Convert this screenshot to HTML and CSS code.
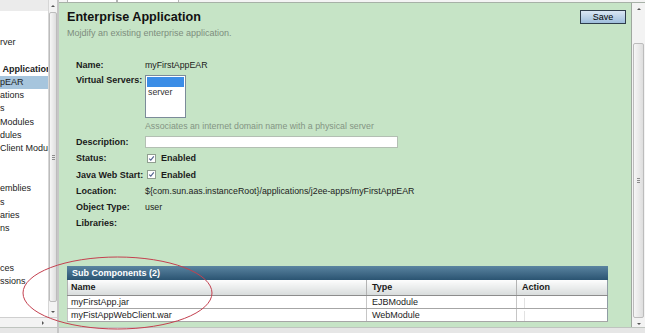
FILE: index.html
```html
<!DOCTYPE html>
<html lang="en">
<head>
    <meta charset="UTF-8">
    <title>Enterprise Application</title>
    <link rel="stylesheet" href="styles.css">
</head>
<body>
    <div class="window">
        <aside class="sidebar">
            <div class="sidebar-body">
                <div class="tree">
                    <div class="tree-top"></div>
                    <ul class="tree-list">
                        <li class="tree-item">rver</li>
                        <li class="tree-item group bold">&nbsp;Application</li>
                        <li class="tree-item selected">pEAR</li>
                        <li class="tree-item">ations</li>
                        <li class="tree-item">s</li>
                        <li class="tree-item">Modules</li>
                        <li class="tree-item">dules</li>
                        <li class="tree-item">Client Module</li>
                        <li class="tree-item group-wide">emblies</li>
                        <li class="tree-item">s</li>
                        <li class="tree-item">aries</li>
                        <li class="tree-item">ns</li>
                        <li class="tree-item group-wide">ces</li>
                        <li class="tree-item">ssions</li>
                    </ul>
                </div>
                <div class="vscroll">
                    <div class="arrow arrow-up"></div>
                    <div class="thumb thumb-tree"><span class="grip"></span></div>
                    <div class="arrow arrow-down"></div>
                </div>
            </div>
            <div class="hscroll">
                <div class="arrow arrow-right"></div>
            </div>
            <div class="bottom-strip"></div>
        </aside>

        <div class="divider"></div>

        <div class="frame">
            <div class="tabs">
                <span class="tab tab-first"></span>
                <span class="tab tab-second"></span>
            </div>
            <div class="frame-body">
                <section class="panel">
                    <div class="page-head">
                        <h1 class="page-title">Enterprise Application</h1>
                        <button class="save-button">Save</button>
                    </div>
                    <p class="page-help">Mojdify an existing enterprise application.</p>

                    <div class="props">
                        <div class="prop-label">Name:</div>
                        <div class="prop-value">myFirstAppEAR</div>

                        <div class="prop-label top">Virtual Servers:</div>
                        <div class="prop-value">
                            <div class="listbox">
                                <div class="listbox-selected"></div>
                                <div class="listbox-option">server</div>
                            </div>
                        </div>

                        <div class="prop-label"></div>
                        <div class="prop-value prop-hint">Associates an internet domain name with a physical server</div>

                        <div class="prop-label">Description:</div>
                        <div class="prop-value"><div class="text-input"></div></div>

                        <div class="prop-label">Status:</div>
                        <div class="prop-value">
                            <span class="check">
                                <span class="checkbox">
                                    <svg width="7" height="7" viewBox="0 0 7 7"><path d="M1.2 3.6 L2.8 5.2 L5.8 1.4" fill="none" stroke="#52628f" stroke-width="1.1"/></svg>
                                </span>
                                Enabled
                            </span>
                        </div>

                        <div class="prop-label">Java Web Start:</div>
                        <div class="prop-value">
                            <span class="check">
                                <span class="checkbox">
                                    <svg width="7" height="7" viewBox="0 0 7 7"><path d="M1.2 3.6 L2.8 5.2 L5.8 1.4" fill="none" stroke="#52628f" stroke-width="1.1"/></svg>
                                </span>
                                Enabled
                            </span>
                        </div>

                        <div class="prop-label">Location:</div>
                        <div class="prop-value">${com.sun.aas.instanceRoot}/applications/j2ee-apps/myFirstAppEAR</div>

                        <div class="prop-label">Object Type:</div>
                        <div class="prop-value">user</div>

                        <div class="prop-label">Libraries:</div>
                        <div class="prop-value"></div>
                    </div>

                    <div class="components">
                        <div class="components-title">Sub Components (2)</div>
                        <table class="components-table">
                            <colgroup>
                                <col class="col-name">
                                <col class="col-type">
                                <col class="col-action">
                            </colgroup>
                            <thead>
                                <tr>
                                    <th>Name</th>
                                    <th>Type</th>
                                    <th>Action</th>
                                </tr>
                            </thead>
                            <tbody>
                                <tr>
                                    <td>myFirstApp.jar</td>
                                    <td>EJBModule</td>
                                    <td><span class="action-slot"></span></td>
                                </tr>
                                <tr>
                                    <td>myFistAppWebClient.war</td>
                                    <td>WebModule</td>
                                    <td><span class="action-slot"></span></td>
                                </tr>
                            </tbody>
                        </table>
                    </div>
                </section>
                <div class="vscroll frame-scroll">
                    <div class="arrow arrow-up"></div>
                    <div class="thumb thumb-frame"><span class="grip"></span></div>
                    <div class="arrow arrow-down"></div>
                </div>
            </div>
            <div class="bottom-strip"></div>
        </div>

        <svg class="annotation" width="645" height="333" viewBox="0 0 645 333">
            <ellipse cx="117.5" cy="293" rx="94.5" ry="36" fill="none" stroke="#c4404f" stroke-width="1"/>
        </svg>
    </div>
</body>
</html>
```

FILE: styles.css
```css
body {
    margin: 0;
    font-family: "Liberation Sans", Arial, sans-serif;
    font-size: 9px;
    color: #1c1c1c;
    background: #e9e9e9;
}

.window {
    position: relative;
    display: flex;
    height: 333px;
    overflow: hidden;
}

/* left navigation tree, scrolled sideways so labels are clipped */
.sidebar {
    width: 57px;
    display: flex;
    flex-direction: column;
    background: #ececec;
}

.sidebar-body {
    flex: 1;
    display: flex;
    min-height: 0;
}

.tree {
    width: 48px;
    background: #fff;
    overflow: hidden;
    white-space: nowrap;
}

.tree-top {
    height: 11px;
    background: #ebebeb;
}

.tree-list {
    list-style: none;
    margin: 0;
    padding: 25px 0 0;
}

.tree-item {
    line-height: 13.3px;
    color: #222;
}

.tree-item.bold {
    font-weight: bold;
}

.tree-item.group {
    margin-top: 13.3px;
}

.tree-item.group-wide {
    margin-top: 26.6px;
}

.tree-item.selected {
    background: #a6c5dd;
}

/* scrollbars */
.vscroll {
    width: 8px;
    background: #f3f3f3;
    border-left: 1px solid #d6d6d6;
    display: flex;
    flex-direction: column;
    align-items: center;
}

.arrow {
    height: 11px;
    width: 100%;
    display: flex;
    align-items: center;
    justify-content: center;
    flex-shrink: 0;
}

.arrow::before {
    content: "";
    border-left: 2px solid transparent;
    border-right: 2px solid transparent;
}

.arrow-up::before {
    border-bottom: 2px solid #555;
}

.arrow-down {
    margin-top: auto;
}

.arrow-down::before {
    border-top: 2px solid #555;
}

.arrow-right {
    width: 11px;
    height: 9px;
}

.arrow-right::before {
    border: 2px solid transparent;
    border-right: none;
    border-left: 2px solid #555;
}

.thumb {
    width: 6px;
    border: 1px solid #bcbcbc;
    border-radius: 2px;
    background: linear-gradient(90deg, #f6f6f6, #dedede);
    display: flex;
    align-items: center;
    justify-content: center;
    flex-shrink: 0;
}

.thumb-tree {
    height: 288px;
    margin-top: 1px;
}

.grip {
    width: 3px;
    height: 5px;
    background: repeating-linear-gradient(#8c8c8c 0 1px, transparent 1px 2px);
}

.hscroll {
    height: 9px;
    background: #f3f3f3;
    border-top: 1px solid #cfcfcf;
    display: flex;
    align-items: center;
    padding-left: 37px;
}

.bottom-strip {
    height: 5px;
    background: #e6e6e6;
    border-top: 1px solid #bfc4bf;
}

.divider {
    width: 2px;
    background: #c6c6c6;
}

/* main frame */
.frame {
    flex: 1;
    display: flex;
    flex-direction: column;
}

.tabs {
    height: 2px;
    display: flex;
    background: #f4f4f4;
    border-bottom: 1px solid #a7b1a7;
}

.tab {
    background: #fff;
    border-left: 1px solid #b4b4b4;
    border-right: 1px solid #b4b4b4;
}

.tab-first {
    width: 48px;
    margin-left: 8px;
}

.tab-second {
    width: 60px;
}

.frame-body {
    flex: 1;
    display: flex;
    min-height: 0;
}

.panel {
    flex: 1;
    background: #c6e4c6;
    padding: 7px 5px 0 8px;
    display: flex;
    flex-direction: column;
}

.frame-scroll {
    width: 13px;
    border-left: 1px solid #9fa89f;
}

.frame-scroll .arrow {
    height: 12px;
}

.thumb-frame {
    width: 9px;
    height: 273px;
    margin-top: 28px;
}

.page-head {
    display: flex;
    justify-content: space-between;
    align-items: center;
    height: 14px;
}

.page-title {
    margin: 0;
    font-size: 12.6px;
    font-weight: bold;
    color: #111;
}

.save-button {
    width: 46px;
    height: 14px;
    padding: 0;
    border: 1px solid #2e3d4b;
    background: linear-gradient(#dae7f4, #9ebedc);
    font-family: "Liberation Sans", Arial, sans-serif;
    font-size: 9px;
    color: #000;
}

.page-help {
    margin: 4px 0 0;
    line-height: 11px;
    color: #7d8d7d;
}

/* property sheet */
.props {
    display: grid;
    grid-template-columns: 69px 1fr;
    margin: 18px 0 0 9px;
}

.prop-label {
    font-weight: bold;
    line-height: 16px;
    color: #1a1a1a;
}

.prop-label.top {
    padding-top: 2px;
    line-height: 11px;
}

.prop-value {
    font-size: 8.8px;
    line-height: 16px;
    color: #1c1c1c;
}

.prop-hint {
    color: #849484;
}

.listbox {
    width: 39px;
    height: 41px;
    margin-top: 2px;
    border: 1px solid #7b8b99;
    background: #fff;
}

.listbox-selected {
    height: 10px;
    margin: 1px;
    background: #3b8de6;
}

.listbox-option {
    padding-left: 2px;
    line-height: 9px;
    color: #333;
}

.text-input {
    width: 251px;
    height: 10px;
    margin-top: 2px;
    border: 1px solid #b3bfb3;
    background: #fff;
}

.check {
    display: inline-flex;
    align-items: center;
    gap: 5px;
    margin-left: 2px;
    font-size: 9px;
    font-weight: bold;
}

.checkbox {
    width: 7px;
    height: 7px;
    border: 1px solid #909e90;
    background: #fff;
    display: flex;
}

/* sub components table */
.components {
    margin: 35px 18px 0 0;
}

.components-title {
    height: 14px;
    line-height: 14px;
    padding-left: 5px;
    color: #fff;
    font-weight: bold;
    background: linear-gradient(#5a84a0, #2b5472);
}

.components-table {
    width: 100%;
    border-collapse: collapse;
    table-layout: fixed;
    background: #fff;
    border-left: 1px solid #8f9ca4;
    border-right: 1px solid #8f9ca4;
}

.col-name {
    width: 299px;
}

.col-type {
    width: 150px;
}

.components-table th {
    line-height: 15px;
    padding: 0 4px 0 3px;
    text-align: left;
    font-weight: bold;
    color: #1a1a1a;
    background: linear-gradient(#fdfdfd, #d8dcdc);
    border-bottom: 1px solid #8c8c8c;
    border-left: 1px solid #b3b3b3;
}

.components-table td {
    line-height: 12px;
    padding: 0 4px 0 3px;
    color: #1c1c1c;
    border-bottom: 1px solid #a6a6a6;
    border-left: 1px solid #c6c6c6;
}

.components-table th:nth-child(n+2),
.components-table td:nth-child(n+2) {
    padding-left: 5px;
}

.action-slot {
    display: inline-block;
    width: 1px;
    height: 10px;
    margin-left: 2px;
    vertical-align: middle;
    background: #e2e2e2;
}

.annotation {
    position: absolute;
    top: 0;
    left: 0;
    pointer-events: none;
}
```
